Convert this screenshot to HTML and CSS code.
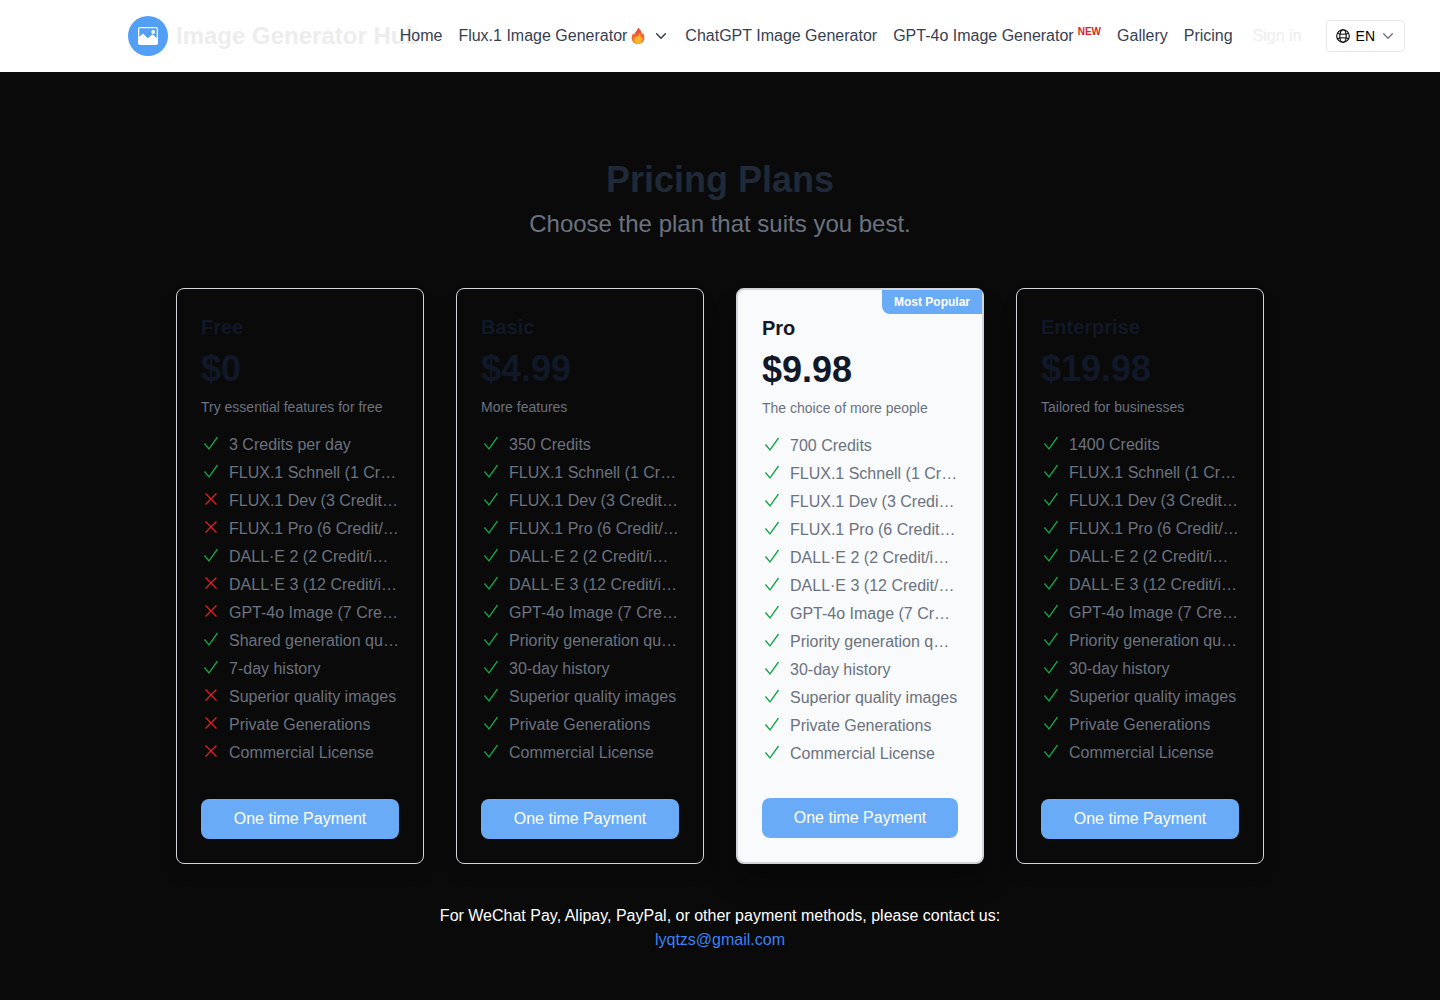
FILE: index.html
```html
<!DOCTYPE html>
<html lang="en">
<head>
    <meta charset="UTF-8">
    <meta name="viewport" content="width=device-width, initial-scale=1.0">
    <title>Pricing Plans - Image Generator Hub</title>
    <link rel="stylesheet" href="styles.css">
</head>
<body>
    <header class="header">
        <a href="#" class="logo">
            <svg class="logo-icon" viewBox="0 0 40 40" aria-hidden="true">
                <circle cx="20" cy="20" r="20" fill="#539ff5"/>
                <rect x="10" y="11" width="20" height="18" rx="2" fill="#fff"/>
                <path d="M11.300 12.300h17.400v10l-3.200-3.300q-1-.8-2 0l-3.200 3-1.200-.2-3.200-3.600q-.9-.8-1.800 0l-2.800 2.800z" fill="#539ff5"/>
                <circle cx="25.200" cy="16" r="1.900" fill="#fff"/>
            </svg>
            <span class="logo-text">Image Generator Hub</span>
        </a>
        <nav class="nav">
            <a href="#">Home</a>
            <a href="#" class="nav-menu">
                Flux.1 Image Generator
                <svg class="fire" viewBox="0 0 14 18" aria-hidden="true">
                    <defs>
                        <linearGradient id="flame" x1="0" y1="0" x2="0" y2="1">
                            <stop offset="0" stop-color="#e5402c"/>
                            <stop offset="1" stop-color="#f7902c"/>
                        </linearGradient>
                    </defs>
                    <path d="M6.800.8C7 3.200 3.800 5 3 8c-.4-.6-.6-1.300-.5-2C1 7.500.6 9.500.7 11.500.9 15 3.500 17.200 7 17.200s6.200-2.200 6.400-5.900c.1-2.300-.7-4.300-1.700-5.800 0 1-.2 1.800-.8 2.300C10.800 5 9.500 2.300 6.800.8z" fill="url(#flame)"/>
                    <path d="M8.200 6c.2 2.300-1.500 3.200-2.500 4.500-.4-.3-.6-.8-.7-1.300-1.300 1.300-1.900 2.900-1.500 4.600.4 1.900 1.800 2.900 3.700 2.900 2.300 0 4-1.500 4.100-3.900.1-1.200-.3-2.100-.8-2.900-.2.500-.4.900-.8 1.100C9.800 9.200 9.400 7.200 8.200 6z" fill="#fdb52b"/>
                </svg>
                <svg class="chevron" viewBox="0 0 16 16" aria-hidden="true"><path d="M3 5.500l5 5 5-5"/></svg>
            </a>
            <a href="#">ChatGPT Image Generator</a>
            <a href="#" class="nav-new">GPT-4o Image Generator <span class="new">NEW</span></a>
            <a href="#">Gallery</a>
            <a href="#">Pricing</a>
        </nav>
        <a href="#" class="sign-in">Sign in</a>
        <button class="lang" type="button">
            <svg class="globe" viewBox="1 1 14 14" aria-hidden="true">
                <circle cx="8" cy="8" r="6.300"/>
                <ellipse cx="8" cy="8" rx="3.200" ry="6.300"/>
                <path d="M2.500 5.500q5.500 1.400 11 0M2.500 10.500q5.500-1.400 11 0"/>
            </svg>
            EN
            <svg class="chevron chevron-small" viewBox="0 0 16 16" aria-hidden="true"><path d="M3 5.500l5 5 5-5"/></svg>
        </button>
    </header>

    <main class="pricing">
        <h1>Pricing Plans</h1>
        <p class="subtitle">Choose the plan that suits you best.</p>
        <div class="plans" id="plans"></div>
        <p class="contact">For WeChat Pay, Alipay, PayPal, or other payment methods, please contact us:<br>
            <a href="mailto:lyqtzs@gmail.com">lyqtzs@gmail.com</a>
        </p>
    </main>

    <script src="script.js"></script>
</body>
</html>
```
FILE: styles.css
```css
* {
    box-sizing: border-box;
}

body {
    margin: 0;
    background-color: #0a0a0a;
    color: #ededed;
    font-family: "Liberation Sans", Arial, sans-serif;
    font-size: 16px;
    line-height: 24px;
}

h1, h2, p, ul {
    margin: 0;
    padding: 0;
}

a {
    color: inherit;
    text-decoration: none;
}

button {
    font-family: inherit;
    cursor: pointer;
}

.header {
    display: flex;
    align-items: center;
    height: 72px;
    padding: 0 35px 0 128px;
    background-color: white;
    white-space: nowrap;
}

.logo {
    display: flex;
    flex: 1;
    align-items: center;
    gap: 8px;
    min-width: 0;
}

.logo-icon {
    flex: none;
    width: 40px;
    height: 40px;
}

.logo-text {
    font-size: 24px;
    line-height: 32px;
    font-weight: bold;
}

.nav {
    position: relative;
    display: flex;
    gap: 16px;
    color: #374151;
}

.nav-menu {
    display: flex;
    align-items: center;
}

.fire {
    width: 14px;
    height: 18px;
    margin: 0 8px 0 4px;
}

.chevron {
    width: 14px;
    height: 14px;
    fill: none;
    stroke: currentColor;
    stroke-width: 1.8;
    stroke-linecap: round;
    stroke-linejoin: round;
}

.nav .chevron {
    width: 16px;
}

.nav-new {
    display: flex;
    gap: 4px;
}

.new {
    color: #dc2626;
    font-size: 10px;
    line-height: 16px;
    font-weight: bold;
}

.sign-in {
    margin: 0 24px 0 20px;
}

.lang {
    display: flex;
    align-items: center;
    gap: 6px;
    height: 32px;
    padding: 0 9px;
    background-color: white;
    border: 1px solid #e5e7eb;
    border-radius: 4px;
    color: black;
    font-size: 14px;
}

.globe {
    width: 14px;
    height: 14px;
    fill: none;
    stroke: currentColor;
    stroke-width: 1.1;
}

.chevron-small {
    color: #6b7280;
    stroke-width: 1.5;
}

.pricing {
    max-width: 1152px;
    margin: 0 auto;
    padding: 88px 32px 48px;
    text-align: center;
}

.pricing h1 {
    color: #1f2937;
    font-size: 36px;
    line-height: 40px;
}

.subtitle {
    margin-top: 8px;
    color: #6b7280;
    font-size: 24px;
    line-height: 32px;
}

.plans {
    display: grid;
    grid-template-columns: repeat(4, minmax(0, 1fr));
    gap: 32px;
    margin-top: 48px;
    text-align: left;
}

.plan {
    position: relative;
    display: flex;
    flex-direction: column;
    padding: 24px;
    border: 1px solid #d1d5db;
    border-radius: 8px;
    box-shadow: 0 10px 15px rgba(0, 0, 0, 0.1);
}

.plan.popular {
    background-color: #f9fafb;
    border-width: 2px;
    box-shadow: 0 20px 25px rgba(0, 0, 0, 0.3);
}

.badge {
    position: absolute;
    top: 0;
    right: 0;
    padding: 4px 12px;
    background-color: #6aabf7;
    border-bottom-left-radius: 8px;
    color: white;
    font-size: 12px;
    line-height: 16px;
    font-weight: bold;
}

.plan h2 {
    color: #111827;
    font-size: 20px;
    line-height: 28px;
}

.price {
    margin-top: 8px;
    color: #111827;
    font-size: 36px;
    line-height: 40px;
    font-weight: bold;
}

.description {
    margin-top: 8px;
    color: #6b7280;
    font-size: 14px;
    line-height: 20px;
}

.features {
    flex: 1;
    margin: 16px 0 32px;
    list-style: none;
    color: #6b7280;
}

.features li {
    display: flex;
    gap: 8px;
    margin-bottom: 4px;
}

.features li:last-child {
    margin-bottom: 0;
}

.features span {
    overflow: hidden;
    text-overflow: ellipsis;
    white-space: nowrap;
}

.mark {
    flex: none;
    width: 20px;
    height: 20px;
    fill: none;
    stroke: #16a34a;
    stroke-width: 1.3;
}

.mark.no {
    stroke: #dc2626;
}

.pay {
    height: 40px;
    border: none;
    border-radius: 8px;
    background-color: #6aabf7;
    color: white;
    font-size: 16px;
}

.pay:hover {
    background-color: #539ff5;
}

.contact {
    margin-top: 40px;
    color: white;
}

.contact a {
    color: #3b82f6;
}
```
FILE: script.js
```js
const commonFeatures = [
    'FLUX.1 Schnell (1 Credit/image)',
    'FLUX.1 Dev (3 Credit/image)',
    'FLUX.1 Pro (6 Credit/image)',
    'DALL·E 2 (2 Credit/image)',
    'DALL·E 3 (12 Credit/image)',
    'GPT-4o Image (7 Credit/image)'
];
const extras = ['Superior quality images', 'Private Generations', 'Commercial License'];

const plans = [
    { name: 'Free', price: '$0', description: 'Try essential features for free', credits: '3 Credits per day', queue: 'Shared generation queue', history: '7-day history', missing: [2, 3, 5, 6, 9, 10, 11] },
    { name: 'Basic', price: '$4.99', description: 'More features', credits: '350 Credits' },
    { name: 'Pro', price: '$9.98', description: 'The choice of more people', credits: '700 Credits', popular: true },
    { name: 'Enterprise', price: '$19.98', description: 'Tailored for businesses', credits: '1400 Credits' }
];

const checkIcon = '<svg class="mark" viewBox="0 0 20 20" role="img" aria-label="Included"><path d="M3.500 10.500l4.500 5.500 8.500-12"/></svg>';
const crossIcon = '<svg class="mark no" viewBox="0 0 20 20" role="img" aria-label="Not included"><path d="M4.500 4.500l11 11M15.500 4.500l-11 11"/></svg>';

function renderPlan(plan) {
    const missing = plan.missing || [];
    const features = [
        plan.credits,
        ...commonFeatures,
        plan.queue || 'Priority generation queue',
        plan.history || '30-day history',
        ...extras
    ];

    return `
        <section class="plan ${plan.popular ? 'popular' : ''}">
            ${plan.popular ? '<div class="badge">Most Popular</div>' : ''}
            <h2>${plan.name}</h2>
            <p class="price">${plan.price}</p>
            <p class="description">${plan.description}</p>
            <ul class="features">
                ${features.map((text, i) => `<li>${missing.includes(i) ? crossIcon : checkIcon}<span>${text}</span></li>`).join('')}
            </ul>
            <button class="pay" type="button">One time Payment</button>
        </section>
    `;
}

document.getElementById('plans').innerHTML = plans.map(renderPlan).join('');
```
